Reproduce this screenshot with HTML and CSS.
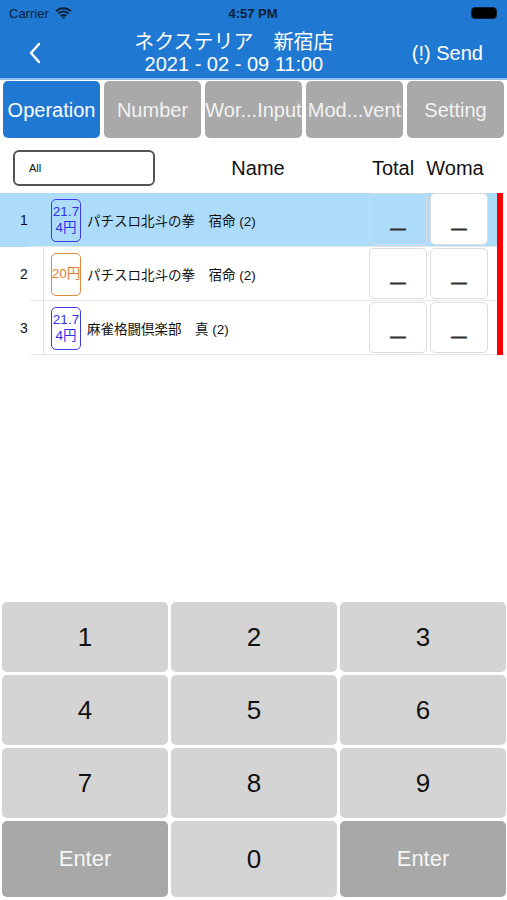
FILE: index.html
```html
<!DOCTYPE html>
<html lang="ja">
<head>
  <meta charset="UTF-8" />
  <meta name="viewport" content="width=device-width, initial-scale=1.0" />
  <title>Operation</title>
  <link rel="stylesheet" href="styles.css">
</head>
<body>

<div id="header">
  <div class="status-bar">
    <div class="carrier">
      Carrier
      <svg class="wifi" width="17" height="12" viewBox="0 0 17 12">
        <path d="M8.5 2.2c2.6 0 5 1 6.8 2.7l1.3-1.4C14.4 1.4 11.6.2 8.5.2S2.6 1.4.4 3.5l1.3 1.4C3.5 3.2 5.9 2.2 8.5 2.2z" fill="#0c2036"/>
        <path d="M8.5 5.6c1.7 0 3.2.6 4.4 1.7l1.3-1.4C12.7 4.5 10.7 3.6 8.5 3.6S4.3 4.5 2.8 5.9l1.3 1.4c1.2-1.1 2.7-1.7 4.4-1.7z" fill="#0c2036"/>
        <path d="M8.5 8.9c.8 0 1.5.3 2 .8l1.3-1.4C11 7.5 9.8 7 8.5 7S6 7.5 5.2 8.3l1.3 1.4c.5-.5 1.200-.8 2-.8z" fill="#0c2036"/>
        <path d="M8.5 11.8l1.6-1.6c-.4-.4-1-.6-1.6-.6s-1.2.2-1.6.6z" fill="#0c2036"/>
      </svg>
    </div>
    <div class="clock">4:57 PM</div>
    <div class="battery"><span></span></div>
  </div>
  <div class="nav-bar">
    <svg class="back" width="14" height="22" viewBox="0 0 14 22">
      <path d="M11 2L3 11l8 9" fill="none" stroke="white" stroke-width="2.4" stroke-linecap="round" stroke-linejoin="round"/>
    </svg>
    <div class="nav-title">
      <div>ネクステリア　新宿店</div>
      <div>2021 - 02 - 09 11:00</div>
    </div>
    <div class="send">(!) Send</div>
  </div>
</div>

<div id="tabs">
  <div class="tab active">Operation</div>
  <div class="tab">Number</div>
  <div class="tab">Wor...Input</div>
  <div class="tab">Mod...vent</div>
  <div class="tab">Setting</div>
</div>

<div id="list-head">
  <div class="filter"><span>All</span></div>
  <div class="col-name">Name</div>
  <div class="col-total">Total</div>
  <div class="col-woma">Woma</div>
</div>

<div id="machine-list">
  <div class="rows">
    <div class="row selected">
      <div class="num">1</div>
      <div class="badge blue">21.7<br>4円</div>
      <div class="machine">パチスロ北斗の拳　宿命 (2)</div>
      <div class="cell clear">_</div>
      <div class="cell">_</div>
    </div>
    <div class="row">
      <div class="num">2</div>
      <div class="badge orange">20円</div>
      <div class="machine">パチスロ北斗の拳　宿命 (2)</div>
      <div class="cell">_</div>
      <div class="cell">_</div>
    </div>
    <div class="row">
      <div class="num">3</div>
      <div class="badge blue">21.7<br>4円</div>
      <div class="machine">麻雀格闘倶楽部　真 (2)</div>
      <div class="cell">_</div>
      <div class="cell">_</div>
    </div>
  </div>
  <div class="red-bar"></div>
</div>

<div id="keypad">
  <div class="key">1</div>
  <div class="key">2</div>
  <div class="key">3</div>
  <div class="key">4</div>
  <div class="key">5</div>
  <div class="key">6</div>
  <div class="key">7</div>
  <div class="key">8</div>
  <div class="key">9</div>
  <div class="key enter">Enter</div>
  <div class="key">0</div>
  <div class="key enter">Enter</div>
</div>

</body>
</html>
```

FILE: styles.css
```css
    body {
      font-family: 'Liberation Sans', 'Noto Sans CJK JP', sans-serif;
      margin: 0;
      padding: 0;
      background-color: white;
      color: #111;
      width: 507px;
      height: 900px;
      display: flex;
      flex-direction: column;
      overflow: hidden;
    }

    #header {
      background-color: #1f78d2;
      color: white;
      border-bottom: 2px solid #8fc0ee;
    }

    .status-bar {
      height: 26px;
      display: flex;
      align-items: center;
      justify-content: space-between;
      padding: 0 10px 0 9px;
      font-size: 13px;
      color: #0c2036;
    }

    .carrier {
      display: flex;
      align-items: center;
      gap: 6px;
      width: 110px;
    }

    .clock {
      font-weight: bold;
    }

    .battery {
      width: 110px;
      display: flex;
      justify-content: flex-end;
    }

    .battery span {
      display: block;
      width: 24px;
      height: 10px;
      background: #000;
      border: 1.5px solid #0c2036;
      border-radius: 4px;
    }

    .nav-bar {
      height: 52px;
      display: flex;
      align-items: center;
      padding: 0 24px 0 28px;
    }

    .back {
      margin-top: 2px;
    }

    .nav-title {
      flex: 1;
      text-align: center;
      font-size: 20px;
      line-height: 22px;
      padding-left: 14px;
      margin-top: 2px;
    }

    .send {
      font-size: 20px;
      margin-top: 2px;
    }

    #tabs {
      display: flex;
      gap: 4px;
      padding: 1px 3px 0;
    }

    .tab {
      flex: 1;
      height: 57px;
      background: #a9a9a9;
      color: #f2f2f2;
      border-radius: 5px;
      display: flex;
      align-items: center;
      justify-content: center;
      font-size: 20px;
      white-space: nowrap;
      overflow: hidden;
      padding-top: 2px;
      box-sizing: border-box;
    }

    .tab.active {
      background: #1f78d2;
      color: white;
    }

    #list-head {
      display: flex;
      align-items: center;
      height: 36px;
      margin-top: 12px;
      font-size: 20px;
    }

    .filter {
      height: 32px;
      margin-left: 13px;
      border: 2px solid #555;
      border-radius: 6px;
      display: flex;
      align-items: center;
      padding-left: 14px;
      font-size: 11px;
      width: 124px;
    }

    .col-name {
      flex: 1;
      text-align: center;
      padding-right: 4px;
    }

    .col-total {
      width: 56px;
      text-align: center;
      margin-right: 4px;
    }

    .col-woma {
      width: 60px;
      text-align: center;
      margin-right: 22px;
    }

    #machine-list {
      display: flex;
      margin-top: 7px;
      padding-right: 4px;
    }

    .rows {
      flex: 1;
    }

    .row {
      display: flex;
      align-items: flex-start;
      height: 54px;
      padding-left: 4px;
      background: linear-gradient(to right, transparent 43px, #e3e3e3 43px, #e3e3e3 44px, transparent 44px);
      position: relative;
    }

    .row + .row::before {
      content: "";
      position: absolute;
      top: -1px;
      left: 30px;
      right: 0;
      height: 1px;
      background: #e6e6e6;
    }

    .row:last-child::after {
      content: "";
      position: absolute;
      bottom: 0;
      left: 30px;
      right: 0;
      height: 1px;
      background: #e6e6e6;
    }

    .row.selected {
      background: #acdcf9;
    }

    .num {
      width: 40px;
      align-self: center;
      text-align: center;
      font-size: 14px;
      box-sizing: border-box;
    }

    .badge {
      align-self: center;
      width: 28px;
      height: 41px;
      margin-left: 7px;
      border: 1.5px solid;
      border-radius: 5px;
      display: flex;
      align-items: center;
      justify-content: center;
      text-align: center;
      font-size: 13.5px;
      line-height: 16px;
      white-space: nowrap;
    }

    .badge.blue {
      color: #2f2fe6;
      border-color: #3b3be6;
    }

    .badge.orange {
      color: #df7d2a;
      border-color: #e08a3c;
    }

    .machine {
      flex: 1;
      align-self: center;
      font-size: 13.5px;
      padding-left: 6px;
    }

    .cell {
      width: 58px;
      height: 52px;
      margin: 0 0 0 3px;
      border: 1px solid #dcdcdc;
      border-radius: 5px;
      background: white;
      display: flex;
      align-items: flex-end;
      justify-content: center;
      font-size: 26px;
      font-weight: bold;
      color: #333;
      -webkit-text-stroke: 1px #333;
      line-height: 26px;
      padding-bottom: 13px;
      box-sizing: border-box;
    }

    .row + .row .cell {
      margin-top: 1px;
      height: 51px;
    }

    .cell.clear {
      background: transparent;
    }

    .cell:last-child {
      margin-right: 9px;
    }

    .red-bar {
      width: 6px;
      background: #ff0000;
    }

    #keypad {
      margin-top: auto;
      margin-bottom: 3px;
      padding: 0 1px 0 2px;
      display: grid;
      grid-template-columns: repeat(3, 1fr);
      grid-template-rows: 70px 70px 70px 76px;
      gap: 3px;
    }

    .key {
      background: #d4d4d4;
      border-radius: 5px;
      display: flex;
      align-items: center;
      justify-content: center;
      font-size: 26px;
      color: #111;
    }

    .key.enter {
      background: #a8a8a8;
      color: #f5f5f5;
      font-size: 22px;
    }
```
